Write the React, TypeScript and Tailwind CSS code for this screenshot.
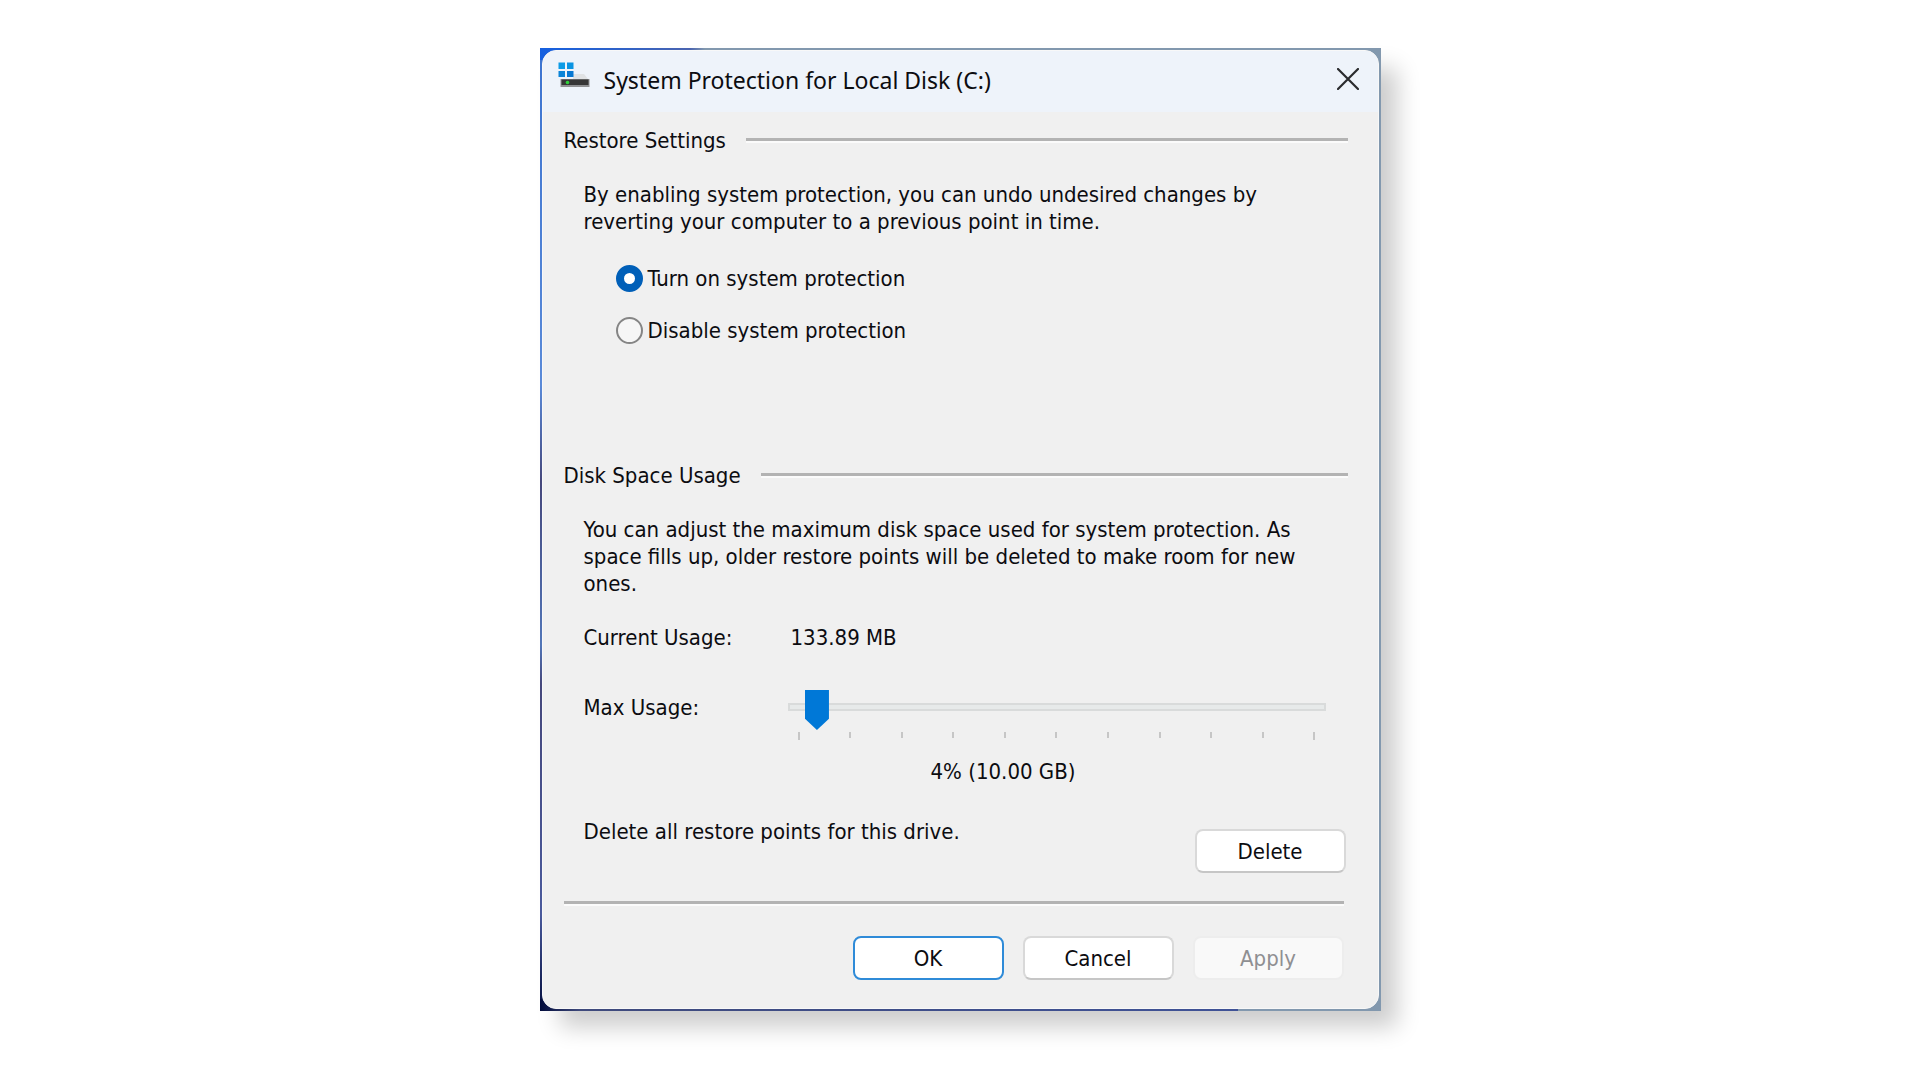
import { useState, type ReactNode } from "react";

const TICKS = Array.from({ length: 11 }, (_, i) => i);

const RADIOS = [
  { value: "on", label: "Turn on system protection" },
  { value: "off", label: "Disable system protection" },
];

function DriveIcon() {
  return (
    <svg width="32" height="26" viewBox="0 0 32 26" aria-hidden="true">
      <path d="M15 12h11l4 5H15z" fill="#e0e2e4" />
      <rect x="0.5" y="0.5" width="6.5" height="6.5" fill="#0c9be6" />
      <rect x="9" y="0.5" width="6.5" height="6.5" fill="#0a94e2" />
      <rect x="0.5" y="9" width="6.5" height="6" fill="#0a84d8" />
      <rect x="9" y="9" width="6.5" height="6" fill="#0878d2" />
      <rect x="2.5" y="17" width="29" height="8" fill="#8f9092" />
      <rect x="3.5" y="17.5" width="27" height="5.5" fill="#363636" />
      <circle cx="9.5" cy="20.5" r="1.8" fill="#2fd23a" />
    </svg>
  );
}

function CloseIcon() {
  return (
    <svg width="22" height="22" viewBox="0 0 22 22" aria-hidden="true">
      <path d="M1 1l20 20M21 1L1 21" stroke="#2a2b2d" strokeWidth="2.2" strokeLinecap="round" fill="none" />
    </svg>
  );
}

function Rule() {
  return <div className="h-[5px] flex-1 border-t-[3px] border-b-2 border-t-[#b3b3b3] border-b-[#fbfbfb]" />;
}

function SectionHeading({ children }: { children: ReactNode }) {
  return (
    <div className="flex items-center gap-5">
      <h2>{children}</h2>
      <Rule />
    </div>
  );
}

function DialogButton({
  children,
  primary = false,
  disabled = false,
}: {
  children: ReactNode;
  primary?: boolean;
  disabled?: boolean;
}) {
  return (
    <button
      type="button"
      disabled={disabled}
      className={`h-11 w-[151px] rounded-lg border-2 ${
        primary
          ? "border-[#2f8bd8] bg-white"
          : disabled
            ? "border-[#ededed] bg-[#f9f9f9] text-[#8f8f92]"
            : "border-[#d9d9d9] border-b-[#c6c6c6] bg-white"
      }`}
    >
      {children}
    </button>
  );
}

export default function App() {
  const [protection, setProtection] = useState("on");
  const [maxUsage, setMaxUsage] = useState(4);

  return (
    <main className="min-h-screen bg-white px-4 py-12 font-['DejaVu_Sans_Condensed','DejaVu_Sans',sans-serif] text-[22px] leading-[27px] text-[#0c0c10]">
      {/* desktop wallpaper peeking out behind the rounded window */}
      <div className="mx-auto max-w-[841px] bg-[#8298ae] bg-[linear-gradient(to_right,#1560e0,#2f62c8_80px,#4a64b0_150px,#8298ae_165px),linear-gradient(to_right,#020c3c,#3f4a7c_40px,#3f5296_83%,#8298ae_83%),linear-gradient(to_bottom,#3d74d0,#5a8ad8_35%,#46487c_45%,#5276b8_62%,#46487c_66%,#4a5a9c_90%,#020c3c)] bg-[length:100%_12px,100%_12px,12px_100%] bg-[position:top_left,bottom_left,top_left] bg-no-repeat p-[2px] shadow-[18px_18px_22px_-2px_rgba(0,0,0,0.2)]">
        <section
          aria-labelledby="dialog-title"
          className="overflow-hidden rounded-[14px] border border-[#f8f8f8] bg-[#f0f0f0]"
        >
          <header className="flex h-[61px] items-start bg-[#eef3fa] pt-[11px] pr-[19px] pl-[15px]">
            <DriveIcon />
            <h1
              id="dialog-title"
              className="mt-[5px] ml-[14px] flex-1 font-['Noto_Sans',sans-serif] text-[23px]"
            >
              System Protection for Local Disk (C:)
            </h1>
            <button type="button" aria-label="Close" className="mt-[6px]">
              <CloseIcon />
            </button>
          </header>

          <div className="pt-[15px] pr-[30px] pb-7 pl-[21px]">
            <SectionHeading>Restore Settings</SectionHeading>
            <p className="mt-[27px] mr-8 ml-5">
              By enabling system protection, you can undo undesired changes by
              reverting your computer to a previous point in time.
            </p>
            <div className="mt-[30px] ml-[52px] flex flex-col items-start gap-[25px]">
              {RADIOS.map((r) => (
                <label key={r.value} className="flex items-center gap-[5px]">
                  <input
                    type="radio"
                    name="protection"
                    value={r.value}
                    checked={protection === r.value}
                    onChange={() => setProtection(r.value)}
                    className="size-[27px] appearance-none rounded-full border-2 border-[#858585] bg-[#f6f6f6] checked:border-8 checked:border-[#005fb8] checked:bg-white"
                  />
                  {r.label}
                </label>
              ))}
            </div>

            <div className="mt-[118px]">
              <SectionHeading>Disk Space Usage</SectionHeading>
            </div>
            <p className="mt-[27px] mr-8 ml-5">
              You can adjust the maximum disk space used for system protection. As
              space fills up, older restore points will be deleted to make room for
              new ones.
            </p>

            <div className="mt-[27px] ml-5 flex">
              <span className="w-[207px]">Current Usage:</span>
              <span>133.89 MB</span>
            </div>

            <div className="mt-[39px] ml-5 flex items-start">
              <label htmlFor="max-usage" className="w-[204px] pt-1">
                Max Usage:
              </label>
              <div className="mr-[22px] flex-1">
                <input
                  id="max-usage"
                  type="range"
                  min={1}
                  max={100}
                  value={maxUsage}
                  onChange={(e) => setMaxUsage(Number(e.target.value))}
                  className="block h-[34px] w-full appearance-none bg-transparent [&::-webkit-slider-runnable-track]:h-2 [&::-webkit-slider-runnable-track]:border-2 [&::-webkit-slider-runnable-track]:border-[#d9dbdb] [&::-webkit-slider-runnable-track]:bg-[#e7eaea] [&::-webkit-slider-thumb]:-mt-[15px] [&::-webkit-slider-thumb]:h-10 [&::-webkit-slider-thumb]:w-6 [&::-webkit-slider-thumb]:appearance-none [&::-webkit-slider-thumb]:bg-[#0078d7] [&::-webkit-slider-thumb]:[clip-path:polygon(0_0,100%_0,100%_72%,50%_100%,0_72%)]"
                />
                <div className="mt-2 flex h-2 justify-between px-[10px]">
                  {TICKS.map((t) => (
                    <span
                      key={t}
                      className="h-[6px] w-[2px] bg-[#c6c6c6] first:h-2 last:h-2"
                    />
                  ))}
                </div>
                <output htmlFor="max-usage" className="mt-[18px] ml-[143px] block">
                  {maxUsage}% ({(maxUsage * 2.5).toFixed(2)} GB)
                </output>
              </div>
            </div>

            <div className="mt-[33px] mr-[2px] ml-5 flex items-start justify-between">
              <p>Delete all restore points for this drive.</p>
              <div className="pt-[11px]">
                <DialogButton>Delete</DialogButton>
              </div>
            </div>

            <footer className="mt-7 mr-1">
              <div className="flex">
                <Rule />
              </div>
              <div className="mt-[30px] flex justify-end gap-[19px]">
                <DialogButton primary>OK</DialogButton>
                <DialogButton>Cancel</DialogButton>
                <DialogButton disabled>Apply</DialogButton>
              </div>
            </footer>
          </div>
        </section>
      </div>
    </main>
  );
}
